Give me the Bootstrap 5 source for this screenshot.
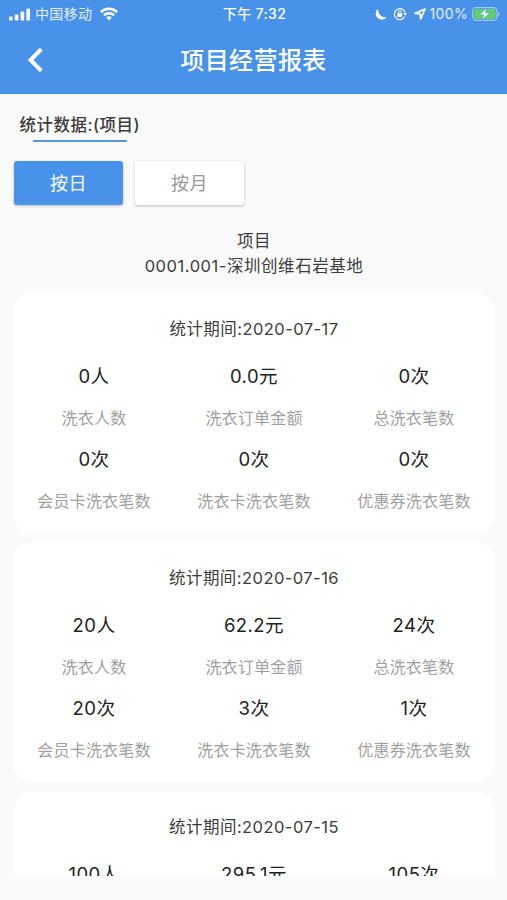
<!DOCTYPE html>
<html lang="zh-CN">
<head>
<meta charset="utf-8">
<meta name="viewport" content="width=device-width, initial-scale=1">
<title>项目经营报表</title>
<link href="https://cdn.jsdelivr.net/npm/bootstrap@5.3.0/dist/css/bootstrap.min.css" rel="stylesheet">
<style>
body{font-family:Inter,"Noto Sans CJK SC",sans-serif;background:#fafafa;color:#3c3c3c;height:900px;overflow:hidden}
.app-header{background:#4892ea;height:94px;color:#fff}
.status-bar{height:28px;font-size:14px;line-height:28px;letter-spacing:.35px;padding:0 7px 0 9px}
.status-side{flex:1 1 0}
.status-text{opacity:.85}
.title-bar{height:64px;padding:0 27px}
.title-bar h1{font-size:24px;font-weight:500;letter-spacing:.4px;line-height:64px;padding-top:1px}
.title-side{width:20px}
.section-title{font-size:16.5px;font-weight:500;letter-spacing:.5px;line-height:24px;padding:19px 0 0 19.5px}
.section-line{width:94px;height:2px;margin:3px 0 0 33px;background:#5498e4}
.range-tabs{padding:19px 14px 0;gap:12px}
.range-tabs .btn{width:109px;height:44px;border:0;border-radius:3px;font-size:18px;letter-spacing:.5px;line-height:43px;padding:0;box-shadow:0 1px 3px rgba(0,0,0,.25)}
.btn-on{background:#4892ea!important;color:#fff!important}
.btn-off{background:#fff!important;color:#999!important}
.project-name{font-size:16.5px;line-height:24.5px;letter-spacing:.55px;margin-top:24px;padding-left:1px}
.report-list{margin:16px 13px 0 14px;height:582px;gap:11px}
.report-card{background:#fff;border:0;border-radius:16px;height:238px;flex:none;padding-top:23px}
.period{font-size:16.5px;line-height:24px;letter-spacing:.45px}
.figures{padding-top:20.5px}
.figure-value{font-size:18.5px;line-height:28px;letter-spacing:.45px;color:#222}
.figure-label{font-size:16px;line-height:24px;letter-spacing:.2px;color:#a0a0a0;margin-top:16px}
.figure-cell{height:83.5px}
svg{display:block;flex:none}
.icon-lock{margin-left:6px}
.icon-arrow{margin-left:7px}
</style>
</head>
<body>
<header class="app-header">
  <div class="status-bar d-flex align-items-center">
    <div class="status-side d-flex align-items-center">
      <svg width="22" height="13" viewBox="0 0 22 13" fill="#fff"><rect x="0" y="8.6" width="3.6" height="4" rx="1"/><rect x="5.8" y="6.4" width="3.6" height="6.2" rx="1"/><rect x="11.6" y="3.6" width="3.6" height="9" rx="1"/><rect x="17.4" y=".4" width="3.6" height="12.2" rx="1"/></svg>
      <span class="status-text ms-1">中国移动</span>
      <svg class="ms-2" width="18" height="14" viewBox="0 0 18 14" fill="none" stroke="#fff" stroke-width="2.6"><path d="M.9 5.1a11.6 11.6 0 0 1 16.2 0M3.9 8.4a7.3 7.3 0 0 1 10.2 0"/><path d="M6.1 10.6a4.2 4.2 0 0 1 5.8 0L9 13.6z" fill="#fff" stroke="none"/></svg>
    </div>
    <span class="fw-medium">下午 7:32</span>
    <div class="status-side d-flex align-items-center justify-content-end">
      <svg width="13" height="13" viewBox="0 0 13 13" fill="#fff"><path d="M4 .7A6.1 6.1 0 1 0 12.6 9.2 C9 9.9 3.9 7 4 .7z"/></svg>
      <svg class="icon-lock" width="14" height="14" viewBox="0 0 14 14" fill="none" stroke="#fff" stroke-width="1.3"><path d="M12.1 5.4a5.5 5.5 0 1 0-.4 4.3"/><path d="M10.3 5.9h3.7l-1.7 2.8z" fill="#fff" stroke="none"/><rect x="4.3" y="6.2" width="5" height="3.7" rx=".6" fill="#fff" stroke="none"/><path d="M5.4 6.2V5.1a1.4 1.4 0 0 1 2.8 0v1.1" stroke-width="1"/></svg>
      <svg class="icon-arrow" width="12" height="12" viewBox="0 0 12 12" fill="none" stroke="#fff" stroke-width="1.7" stroke-linejoin="round"><path d="M11 1 1.2 5.4l5 .5.5 5z"/></svg>
      <span class="status-text ms-1">100%</span>
      <svg class="ms-1" width="28" height="14" viewBox="0 0 28 14"><rect x=".6" y=".6" width="24.4" height="12.8" rx="3.8" fill="none" stroke="#a5c8f4" stroke-width="1.1"/><rect x="2" y="2" width="21.6" height="10" rx="2.4" fill="#62cf68"/><path d="M26.3 4.8v4.4q1.5-.8 1.5-2.2t-1.5-2.2z" fill="#a5c8f4"/><path d="M14.6 1.4 7.8 7.8h4l-1.3 4.8 7-6.6h-4.1z" fill="#fff" stroke="#4892ea" stroke-width=".5"/></svg>
    </div>
  </div>
  <div class="title-bar d-flex align-items-center justify-content-between">
    <svg class="title-side" width="20" height="26" viewBox="0 0 20 26" fill="none" stroke="#fff" stroke-width="4"><path d="M14.3 2.2 3.6 13l10.7 10.8"/></svg>
    <h1 class="m-0">项目经营报表</h1>
    <span class="title-side"></span>
  </div>
</header>
<main>
  <div class="section-title">统计数据:(项目)</div>
  <div class="section-line"></div>
  <div class="range-tabs d-flex">
    <button class="btn btn-on">按日</button>
    <button class="btn btn-off">按月</button>
  </div>
  <div class="project-name text-center">项目<br>0001.001-深圳创维石岩基地</div>
  <div class="report-list d-flex flex-column overflow-hidden">
    <section class="report-card card text-center">
      <div class="period">统计期间:2020-07-17</div>
      <div class="figures row g-0">
        <div class="col-4 figure-cell"><div class="figure-value">0人</div><div class="figure-label">洗衣人数</div></div>
        <div class="col-4 figure-cell"><div class="figure-value">0.0元</div><div class="figure-label">洗衣订单金额</div></div>
        <div class="col-4 figure-cell"><div class="figure-value">0次</div><div class="figure-label">总洗衣笔数</div></div>
        <div class="col-4 figure-cell"><div class="figure-value">0次</div><div class="figure-label">会员卡洗衣笔数</div></div>
        <div class="col-4 figure-cell"><div class="figure-value">0次</div><div class="figure-label">洗衣卡洗衣笔数</div></div>
        <div class="col-4 figure-cell"><div class="figure-value">0次</div><div class="figure-label">优惠券洗衣笔数</div></div>
      </div>
    </section>
    <section class="report-card card text-center">
      <div class="period">统计期间:2020-07-16</div>
      <div class="figures row g-0">
        <div class="col-4 figure-cell"><div class="figure-value">20人</div><div class="figure-label">洗衣人数</div></div>
        <div class="col-4 figure-cell"><div class="figure-value">62.2元</div><div class="figure-label">洗衣订单金额</div></div>
        <div class="col-4 figure-cell"><div class="figure-value">24次</div><div class="figure-label">总洗衣笔数</div></div>
        <div class="col-4 figure-cell"><div class="figure-value">20次</div><div class="figure-label">会员卡洗衣笔数</div></div>
        <div class="col-4 figure-cell"><div class="figure-value">3次</div><div class="figure-label">洗衣卡洗衣笔数</div></div>
        <div class="col-4 figure-cell"><div class="figure-value">1次</div><div class="figure-label">优惠券洗衣笔数</div></div>
      </div>
    </section>
    <section class="report-card card text-center">
      <div class="period">统计期间:2020-07-15</div>
      <div class="figures row g-0">
        <div class="col-4 figure-cell"><div class="figure-value">100人</div></div>
        <div class="col-4 figure-cell"><div class="figure-value">295.1元</div></div>
        <div class="col-4 figure-cell"><div class="figure-value">105次</div></div>
      </div>
    </section>
  </div>
</main>
<script src="https://cdn.jsdelivr.net/npm/bootstrap@5.3.0/dist/js/bootstrap.bundle.min.js"></script>
</body>
</html>
